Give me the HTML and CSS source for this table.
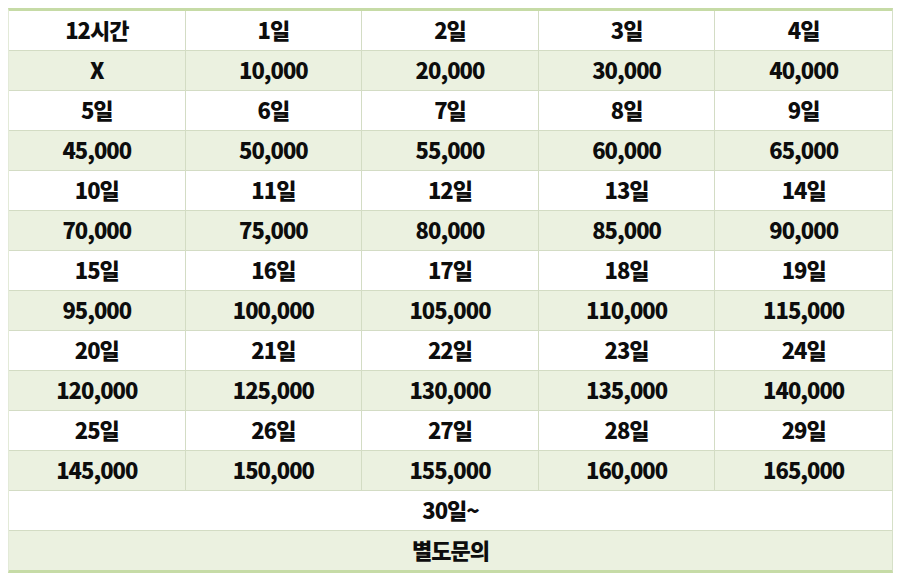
FILE: index.html
```html
<!DOCTYPE html>
<html lang="ko">
<head>
<meta charset="utf-8">
<link rel="stylesheet" href="styles.css">
</head>
<body>
<table class="price">
<tbody>
<tr class="day"><td>12시간</td><td>1일</td><td>2일</td><td>3일</td><td>4일</td></tr>
<tr class="cost"><td>X</td><td>10,000</td><td>20,000</td><td>30,000</td><td>40,000</td></tr>
<tr class="day"><td>5일</td><td>6일</td><td>7일</td><td>8일</td><td>9일</td></tr>
<tr class="cost"><td>45,000</td><td>50,000</td><td>55,000</td><td>60,000</td><td>65,000</td></tr>
<tr class="day"><td>10일</td><td>11일</td><td>12일</td><td>13일</td><td>14일</td></tr>
<tr class="cost"><td>70,000</td><td>75,000</td><td>80,000</td><td>85,000</td><td>90,000</td></tr>
<tr class="day"><td>15일</td><td>16일</td><td>17일</td><td>18일</td><td>19일</td></tr>
<tr class="cost"><td>95,000</td><td>100,000</td><td>105,000</td><td>110,000</td><td>115,000</td></tr>
<tr class="day"><td>20일</td><td>21일</td><td>22일</td><td>23일</td><td>24일</td></tr>
<tr class="cost"><td>120,000</td><td>125,000</td><td>130,000</td><td>135,000</td><td>140,000</td></tr>
<tr class="day"><td>25일</td><td>26일</td><td>27일</td><td>28일</td><td>29일</td></tr>
<tr class="cost"><td>145,000</td><td>150,000</td><td>155,000</td><td>160,000</td><td>165,000</td></tr>
<tr class="day"><td colspan="5">30일~</td></tr>
<tr class="cost last"><td colspan="5">별도문의</td></tr>
</tbody>
</table>
</body>
</html>
```
FILE: styles.css
```css
html, body {
  margin: 0;
  padding: 0;
  background: #ffffff;
}
body {
  padding: 8px 0 0 8px;
}
.price {
  width: 885px;
  table-layout: fixed;
  border-collapse: separate;
  border-spacing: 0;
  border-top: 3px solid #c6dba6;
  border-bottom: 3px solid #c6dba6;
  border-left: 1px solid #e3ead8;
  border-right: 1px solid #d6e0c8;
  font-family: "Noto Sans CJK KR", "Noto Sans", sans-serif;
  font-weight: 900;
  font-size: 22px;
  color: #0d0d0d;
}
.price td {
  height: 39px;
  box-sizing: border-box;
  padding: 0 0 3px;
  text-align: center;
  vertical-align: middle;
  line-height: 1;
  border-bottom: 1px solid #d3dcc4;
  border-right: 1px solid #d3dcc4;
  letter-spacing: -1px;
}
.price tr.last td {
  height: 39px;
}
.price tr:not(.last) td {
  height: 40px;
}
.price td:last-child {
  border-right: none;
}
.price tr.last td {
  border-bottom: none;
}
.price tr.cost td {
  background: #ebf1e0;
}
.price tr.day td {
  background: #ffffff;
}
```
